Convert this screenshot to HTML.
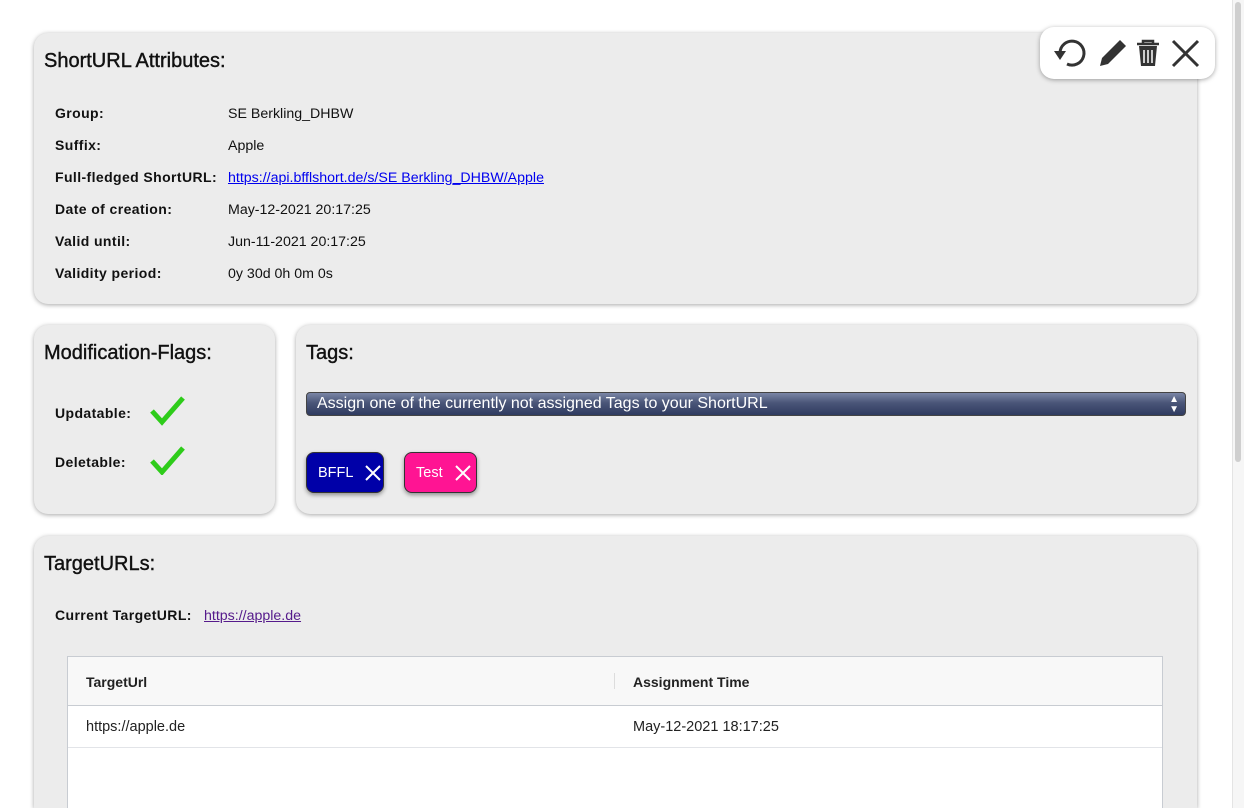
<!DOCTYPE html>
<html style="overflow:hidden;height:808px"><head><meta charset="utf-8"><style>
*{box-sizing:border-box;margin:0;padding:0}
body{width:1244px;height:808px;overflow:hidden;background:#fff;font-family:"Liberation Sans",sans-serif;color:#111;position:relative}
.card{position:absolute;background:#ececec;border-radius:14px;box-shadow:0 1px 5px rgba(0,0,0,.35)}
h2{position:absolute;left:10px;top:17px;font-size:20px;font-weight:normal;color:#111;-webkit-text-stroke:.4px #111}
.row{position:absolute;left:21px;font-size:14.2px;top:1px}
.row b{display:inline-block;width:173px;font-weight:bold;font-size:14px;letter-spacing:.4px}
a{color:#0000ee}
.tag{position:absolute;top:127px;height:41px;border-radius:8px;color:#fff;font-size:14.5px;box-shadow:0 2px 4px rgba(0,0,0,.4);border:1px solid #333;display:flex;align-items:center;padding-left:11px}
</style></head><body>
<div class="card" style="left:34px;top:33px;width:1163px;height:271px">
<h2>ShortURL Attributes:</h2>
<div class="row" style="top:72px"><b>Group:</b>SE Berkling_DHBW</div>
<div class="row" style="top:104px"><b>Suffix:</b>Apple</div>
<div class="row" style="top:136px"><b>Full-fledged ShortURL:</b><a href="#">https://api.bfflshort.de/s/SE Berkling_DHBW/Apple</a></div>
<div class="row" style="top:168px"><b>Date of creation:</b>May-12-2021 20:17:25</div>
<div class="row" style="top:200px"><b>Valid until:</b>Jun-11-2021 20:17:25</div>
<div class="row" style="top:232px"><b>Validity period:</b>0y 30d 0h 0m 0s</div>
</div>
<div style="position:absolute;left:1040px;top:27px;width:175px;height:52px;background:#fff;border-radius:14px;box-shadow:0 1px 5px rgba(0,0,0,.35)">
<svg width="175" height="52" viewBox="0 0 175 52" fill="none" stroke="#333" stroke-width="3">
<path d="M20 26 A12 12 0 1 1 27 37"/><path d="M14 24 L26 24 L20 33 Z" fill="#333" stroke="none"/>
<path d="M60 39 L62 31 L80 13 L86 19 L68 37 Z" fill="#333" stroke="none"/>
<path d="M97 17 h22 M103 17 v-3 h10 v3" stroke-width="2.5"/><path d="M99 19 h18 l-2 20 h-14 Z" fill="#333" stroke="none"/><path d="M104 23v13M108 23v13M112 23v13" stroke="#fff" stroke-width="1.5"/>
<path d="M133 14 L158 39 M158 14 L133 39"/>
</svg></div>
<div class="card" style="left:34px;top:325px;width:241px;height:189px">
<h2>Modification-Flags:</h2>
<div class="row" style="top:80px"><b style="width:auto">Updatable:</b></div>
<div class="row" style="top:129px"><b style="width:auto">Deletable:</b></div>
<svg style="position:absolute;left:115px;top:70px" width="40" height="80"><path d="M3 16 L13 27 L34 3 M3 66 L13 77 L34 53" stroke="#2ecc1a" stroke-width="5" fill="none"/></svg>
</div>
<div class="card" style="left:296px;top:325px;width:901px;height:189px">
<h2>Tags:</h2>
<div style="position:absolute;left:10px;top:67px;width:880px;height:24px;border-radius:4px;border:1px solid #444;background:linear-gradient(#7a86a6,#4a5578 45%,#2f3b60);color:#fff;font-size:16px;padding-left:10px;line-height:22px">Assign one of the currently not assigned Tags to your ShortURL<span style="position:absolute;right:6px;top:0;font-size:10px;line-height:10px;top:2px">▲<br>▼</span></div>
<div class="tag" style="left:10px;width:78px;background:#0000a8">BFFL<svg style="margin-left:12px" width="16" height="16"><path d="M1 1L15 15M15 1L1 15" stroke="#fff" stroke-width="2"/></svg></div>
<div class="tag" style="left:108px;width:73px;background:#ff1493">Test<svg style="margin-left:12px" width="16" height="16"><path d="M1 1L15 15M15 1L1 15" stroke="#fff" stroke-width="2"/></svg></div>
</div>
<div class="card" style="left:34px;top:536px;width:1163px;height:272px;border-bottom-left-radius:0;border-bottom-right-radius:0">
<h2>TargetURLs:</h2>
<div class="row" style="top:71px"><b style="width:149px">Current TargetURL:</b><a href="#" style="color:#551a8b">https://apple.de</a></div>
<div style="position:absolute;left:33px;top:120px;width:1096px;height:152px;background:#fff;border:1px solid #c8ccd2;border-bottom:none">
<div style="height:49px;background:#f8f8f8;border-bottom:1px solid #c8ccd2;position:relative;font-size:14px;font-weight:bold;color:#222">
<span style="position:absolute;left:18px;top:17px">TargetUrl</span>
<span style="position:absolute;left:546px;top:16px;height:16px;border-left:1px solid #ddd"></span>
<span style="position:absolute;left:565px;top:17px">Assignment Time</span></div>
<div style="height:42px;border-bottom:1px solid #e2e4e8;position:relative;font-size:14.5px;color:#222">
<span style="position:absolute;left:18px;top:13px">https://apple.de</span>
<span style="position:absolute;left:565px;top:13px">May-12-2021 18:17:25</span></div>
</div></div>
<div style="position:absolute;left:1232px;top:0;width:12px;height:808px;background:#f6f6f6;border-left:1px solid #e4e4e4"></div>
<div style="position:absolute;left:1235px;top:2px;width:6px;height:460px;background:#cfcfcf;border-radius:3px"></div>
</body></html>
